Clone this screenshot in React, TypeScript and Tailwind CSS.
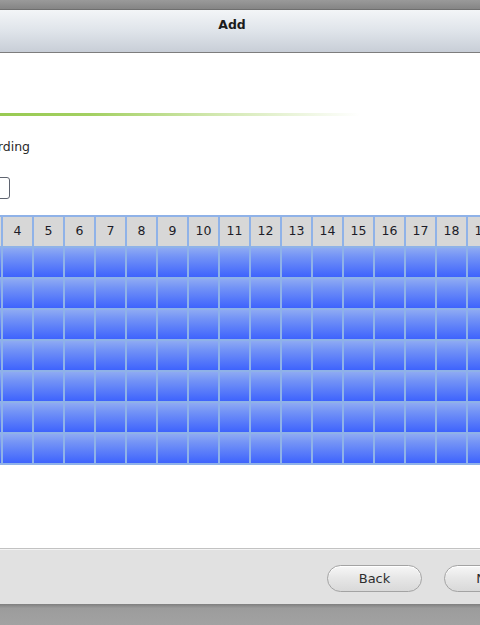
import React from "react";

const hours = Array.from({ length: 21 }, (_, i) => i + 3);
const rows = Array.from({ length: 7 }, (_, i) => i);

export default function App() {
  return (
    <div
      className="w-[480px] h-[625px] overflow-hidden flex flex-col bg-white"
      style={{ fontFamily: '"DejaVu Sans", Verdana, sans-serif' }}
    >
      {/* top dark band */}
      <div className="h-[10px] shrink-0 bg-[linear-gradient(to_bottom,#9a9a9a,#858585)] border-b border-[#6f6f6f]" />
      {/* title bar */}
      <div className="h-[43px] shrink-0 bg-[linear-gradient(to_bottom,#f3f5f7,#dfe4ea_50%,#c8ced7)] border-b border-[#7d7d7d] flex items-start justify-center pt-[7px] pr-[16px]">
        <span className="text-[12.5px] leading-[16px] font-bold text-[#1b1b1b]">Add</span>
      </div>
      {/* body */}
      <div className="h-[495px] shrink-0 overflow-hidden flex flex-col">
        <div className="mt-[60px] h-[3px] w-[360px] bg-[linear-gradient(to_right,#98ca52,#a3d062_25%,#d2e8b0_60%,rgba(255,255,255,0))]" />
        <div className="mt-[22px] h-[18px] w-[30px] overflow-hidden flex justify-end items-center whitespace-nowrap text-[12.5px] text-[#2a2a2a]">
          Schedule Recording
        </div>
        <div className="mt-[21px] h-[22px] w-[50px] ml-[-40px] border border-[#5f6470] rounded-[3px] bg-white" />
        <div className="mt-[16px] ml-[-30px] w-max bg-[#8fb2e8] p-[2px] flex flex-col gap-[2px]">
          <div className="flex gap-[2px]">
            {hours.map((h) => (
              <div
                key={h}
                className="w-[29px] h-[29px] bg-[#d7d7d7] flex items-center justify-center text-[12.5px] text-[#1c1c28]"
              >
                {h}
              </div>
            ))}
          </div>
          {rows.map((r) => (
            <div key={r} className="flex gap-[2px]">
              {hours.map((h) => (
                <div
                  key={h}
                  className="w-[29px] h-[29px] bg-[linear-gradient(to_bottom,#8eaaf3,#7393f6_30%,#3e63fd)]"
                />
              ))}
            </div>
          ))}
        </div>
      </div>
      {/* footer */}
      <div className="h-[56px] shrink-0 border-t border-[#c2c2c2] bg-[#e1e1e1] flex flex-col">
        <div className="h-px bg-[#f4f4f4]" />
        <div className="flex-1 flex items-start pt-[15px] pl-[327px] gap-[22px] whitespace-nowrap">
          <button className="w-[95px] h-[27px] shrink-0 rounded-full border border-[#a3a3a3] bg-[linear-gradient(to_bottom,#f7f7f7,#e6e6e6_50%,#d9d9d9)] text-[13px] text-[#2e2e2e] shadow-[inset_0_1px_0_#ffffff]">
            Back
          </button>
          <button className="w-[95px] h-[27px] shrink-0 rounded-full border border-[#a3a3a3] bg-[linear-gradient(to_bottom,#f7f7f7,#e6e6e6_50%,#d9d9d9)] text-[13px] text-[#2e2e2e] shadow-[inset_0_1px_0_#ffffff]">
            Next
          </button>
        </div>
      </div>
      {/* bottom band */}
      <div className="flex-1 bg-[linear-gradient(to_bottom,#7f7f7f,#9c9c9c_20%,#a2a2a2)]" />
    </div>
  );
}
